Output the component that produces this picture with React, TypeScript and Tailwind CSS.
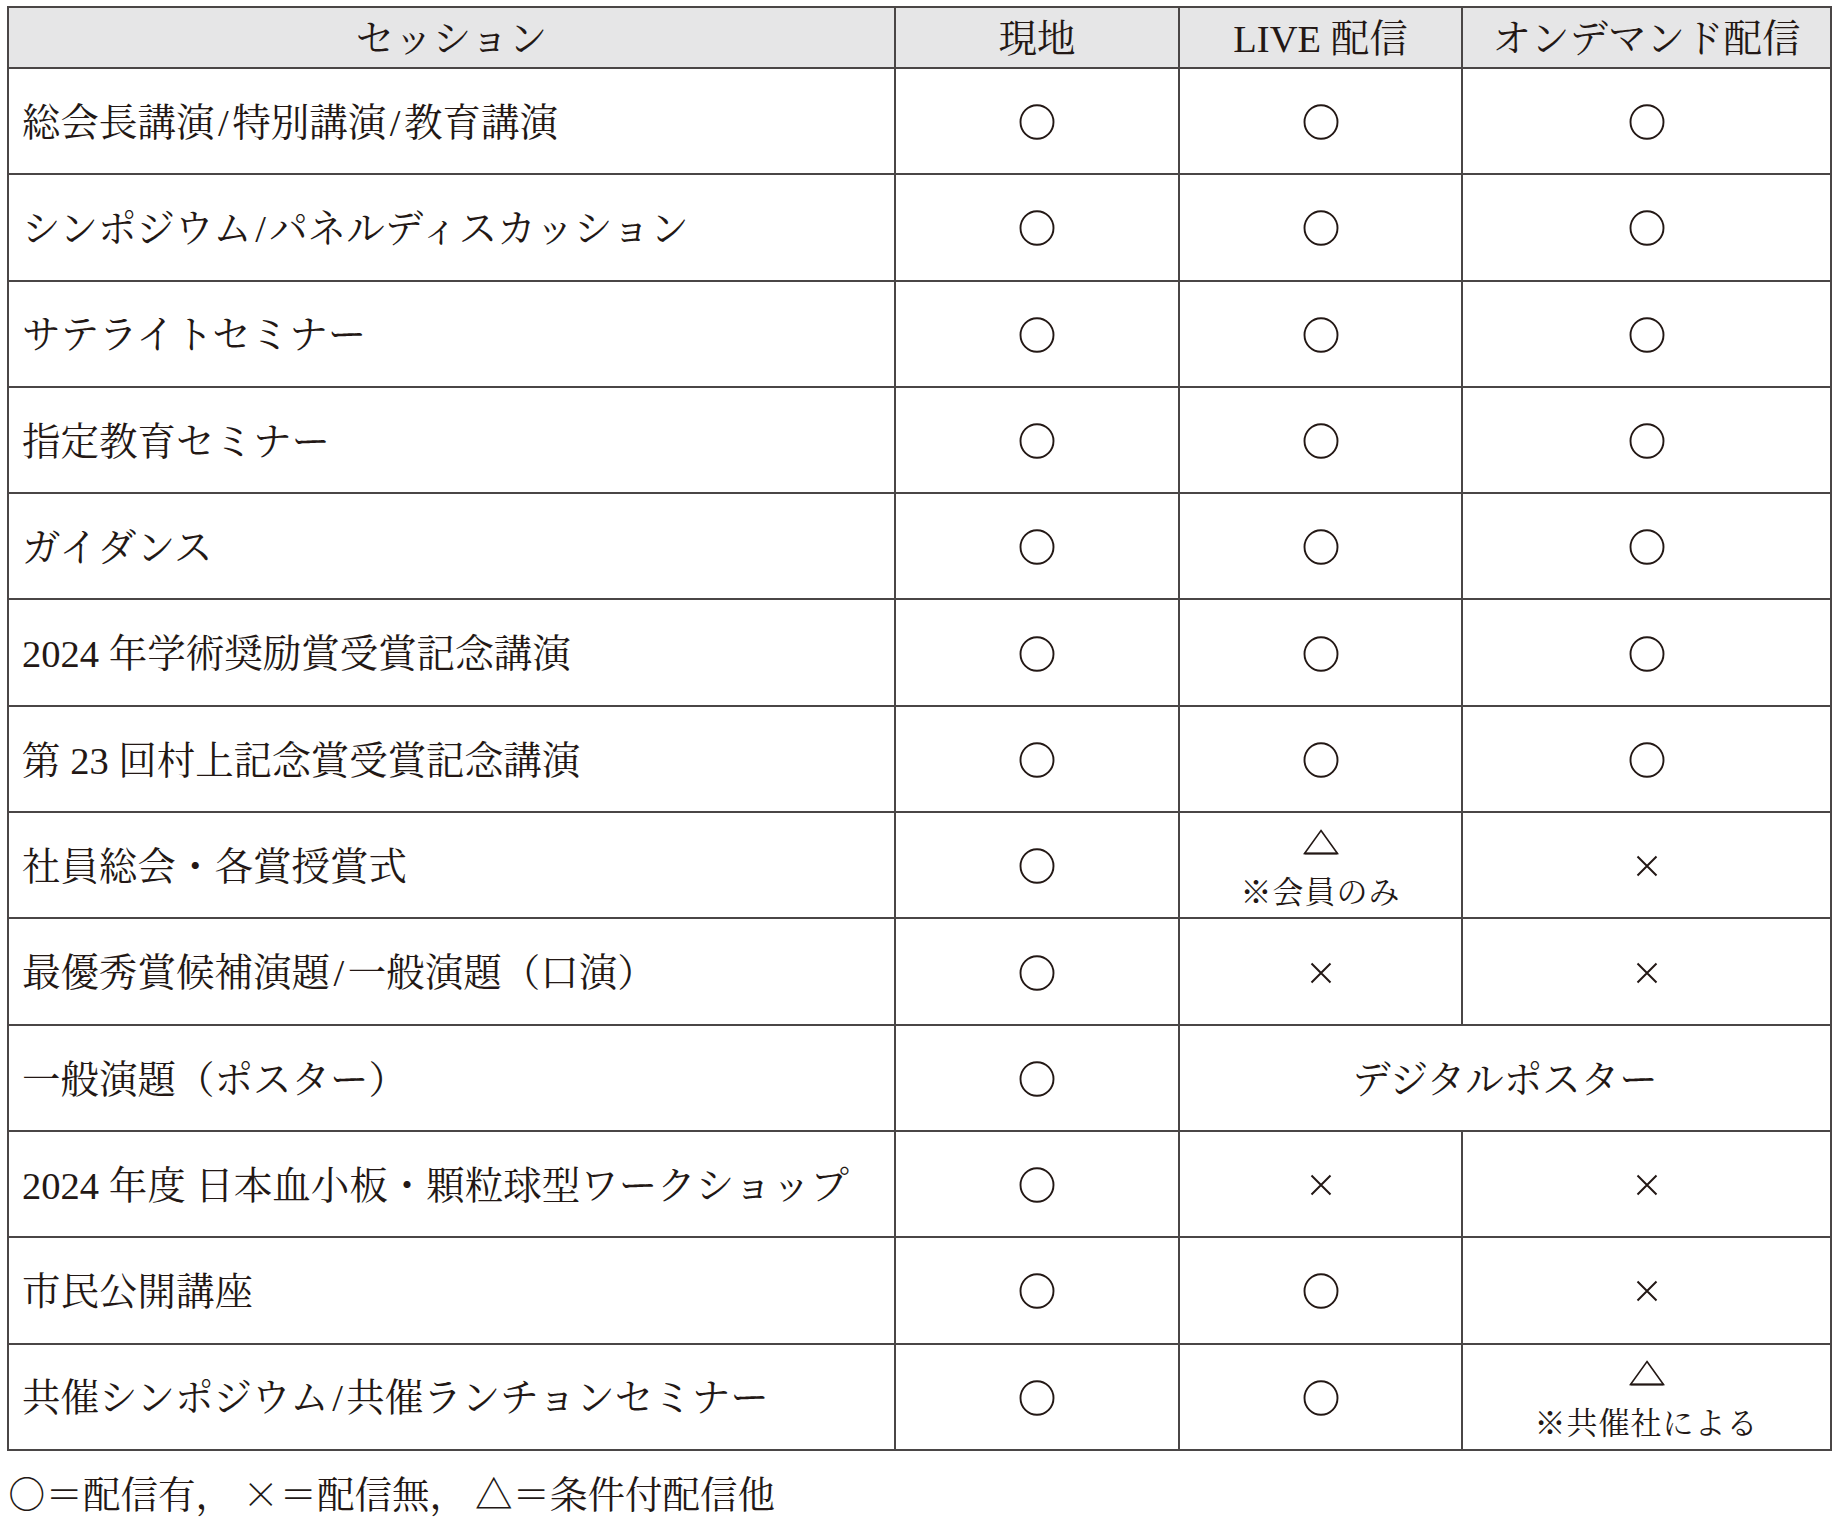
import React from "react";

const FONT = '"Liberation Serif", "Noto Serif CJK JP", "Noto Sans CJK JP", serif';
const CJK = '"Noto Serif CJK JP", "Noto Sans CJK JP", serif';

type Mark = "o" | "x" | "t" | string;

function Circle() {
  return (
    <svg width="36" height="36" viewBox="0 0 36 36" className="block">
      <ellipse cx="18" cy="18" rx="16.5" ry="16.8" fill="none" stroke="#231815" strokeWidth="1.9" />
    </svg>
  );
}

function Cross() {
  return (
    <svg width="22" height="22" viewBox="0 0 22 22" className="block">
      <path d="M1.5 1.5 L20.5 20.5 M20.5 1.5 L1.5 20.5" stroke="#231815" strokeWidth="2" fill="none" />
    </svg>
  );
}

function Triangle() {
  return (
    <svg width="36" height="26" viewBox="0 0 36 26" className="block">
      <path d="M18 1.5 L34.5 24.5 L1.5 24.5 Z" fill="none" stroke="#231815" strokeWidth="1.6" strokeLinejoin="miter" />
      <path d="M1.5 24.5 L34.5 24.5" stroke="#231815" strokeWidth="2.2" />
    </svg>
  );
}

function withSlashes(s: string) {
  const parts = s.split("/");
  return parts.map((p, i) => (
    <React.Fragment key={i}>
      {p}
      {i < parts.length - 1 && <span className="mx-[3.5px]">/</span>}
    </React.Fragment>
  ));
}

function MarkCell({ m, note, span }: { m: Mark; note?: string; span?: boolean }) {
  const base =
    "border-r-2 border-b-2 border-[#4a4646] flex flex-col items-center justify-center text-[#231815]";
  if (m === "t") {
    return (
      <div className={base + " pt-[7px]"}>
        <Triangle />
        <div className="text-[31px] leading-[32px] mt-[22px] tracking-[1px]">{note}</div>
      </div>
    );
  }
  if (m === "o")
    return (
      <div className={base + " pt-[2px]"}>
        <Circle />
      </div>
    );
  if (m === "x")
    return (
      <div className={base + " pt-[2px]"}>
        <Cross />
      </div>
    );
  return (
    <div className={base + " pt-[4px]" + (span ? " col-span-2" : "")}>
      <span className="text-[38.5px] leading-none">{m}</span>
    </div>
  );
}

const rows: { name: string; a: Mark; b: Mark; c?: Mark; bNote?: string; cNote?: string }[] = [
  { name: "総会長講演/特別講演/教育講演", a: "o", b: "o", c: "o" },
  { name: "シンポジウム/パネルディスカッション", a: "o", b: "o", c: "o" },
  { name: "サテライトセミナー", a: "o", b: "o", c: "o" },
  { name: "指定教育セミナー", a: "o", b: "o", c: "o" },
  { name: "ガイダンス", a: "o", b: "o", c: "o" },
  { name: "2024 年学術奨励賞受賞記念講演", a: "o", b: "o", c: "o" },
  { name: "第 23 回村上記念賞受賞記念講演", a: "o", b: "o", c: "o" },
  { name: "社員総会・各賞授賞式", a: "o", b: "t", bNote: "※会員のみ", c: "x" },
  { name: "最優秀賞候補演題/一般演題（口演）", a: "o", b: "x", c: "x" },
  { name: "一般演題（ポスター）", a: "o", b: "デジタルポスター" },
  { name: "2024 年度 日本血小板・顆粒球型ワークショップ", a: "o", b: "x", c: "x" },
  { name: "市民公開講座", a: "o", b: "o", c: "x" },
  { name: "共催シンポジウム/共催ランチョンセミナー", a: "o", b: "o", c: "t", cNote: "※共催社による" },
];

export default function App() {
  const head =
    "border-r-2 border-b-2 border-[#4a4646] bg-[#e6e6e7] flex items-center justify-center pt-[4px] text-[38.5px] leading-none text-[#231815]";
  return (
    <div className="bg-white w-[1842px] h-[1535px] pt-[6px] pl-[7px]" style={{ fontFamily: FONT }}>
      <div className="grid grid-cols-[887px_284px_283px_369px] grid-rows-[61px_repeat(13,106.3px)] border-l-2 border-t-2 border-[#4a4646] w-max">
        <div className={head}>セッション</div>
        <div className={head}>現地</div>
        <div className={head}>LIVE 配信</div>
        <div className={head}>オンデマンド配信</div>
        {rows.map((r, i) => (
          <React.Fragment key={i}>
            <div className="border-r-2 border-b-2 border-[#4a4646] flex items-center pl-[13px] pt-[4px] text-[38.5px] leading-none text-[#231815] whitespace-nowrap">
              {withSlashes(r.name)}
            </div>
            <MarkCell m={r.a} />
            {r.c === undefined ? (
              <MarkCell m={r.b} span />
            ) : (
              <>
                <MarkCell m={r.b} note={r.bNote} />
                <MarkCell m={r.c} note={r.cNote} />
              </>
            )}
          </React.Fragment>
        ))}
      </div>
      <div
        className="mt-[21px] pl-[1px] flex items-center text-[37.5px] leading-[40px] text-[#231815] whitespace-nowrap"
        style={{ fontFamily: CJK }}
      >
        <span>○＝配信有，</span>
        <span className="ml-[9px]">×＝配信無，</span>
        <span className="ml-[8px]">△＝条件付配信他</span>
      </div>
    </div>
  );
}
